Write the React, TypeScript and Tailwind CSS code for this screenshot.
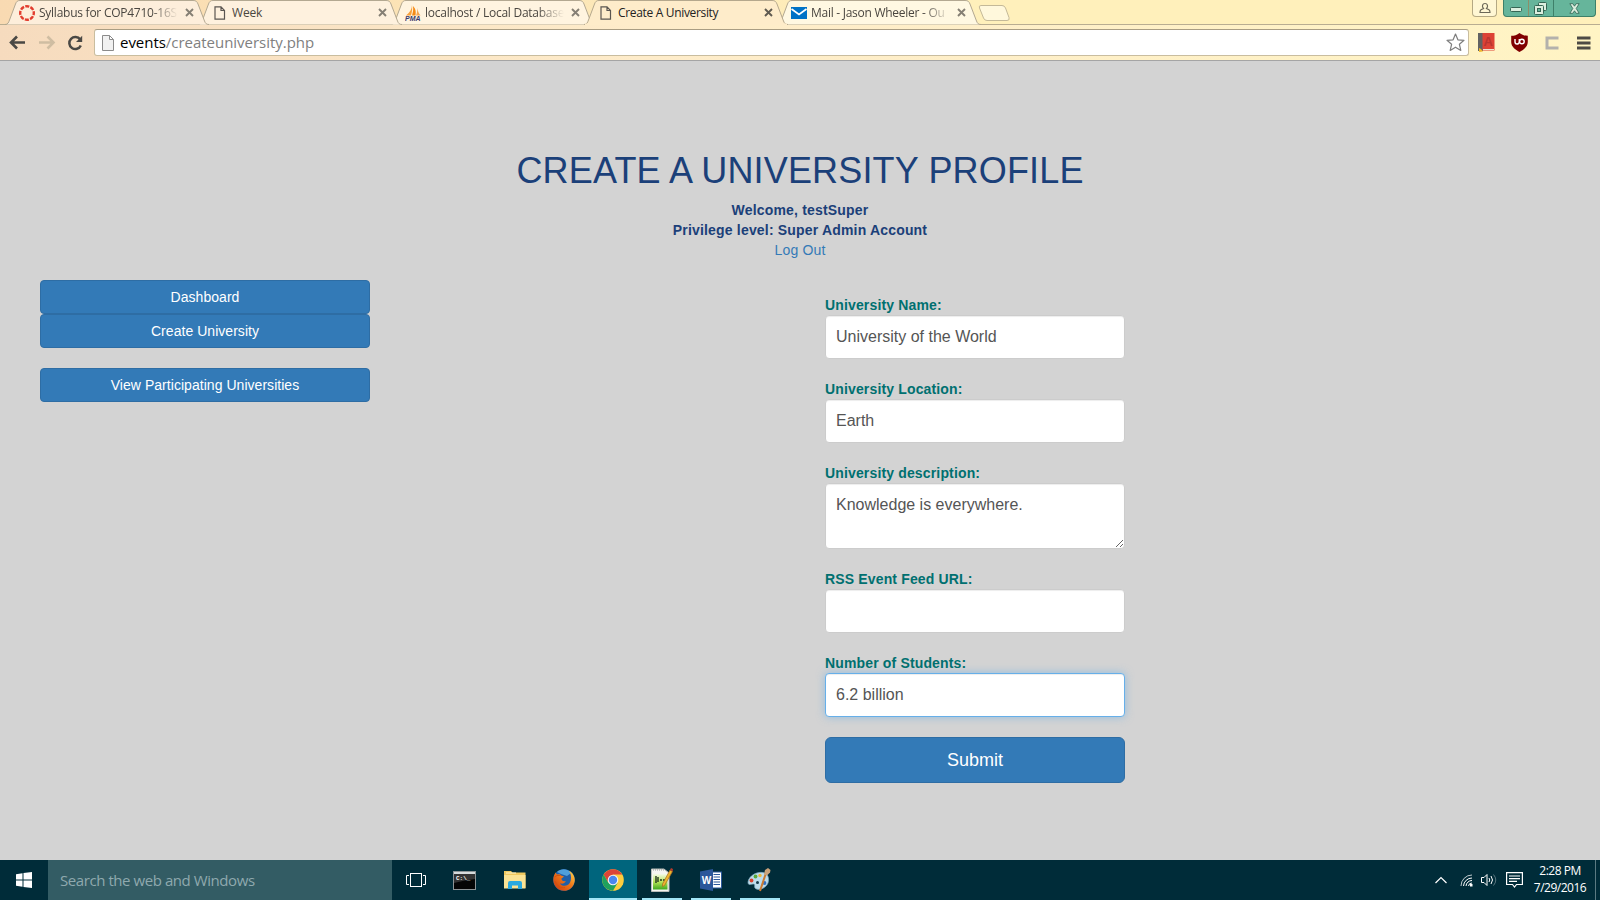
import type { ReactNode } from 'react';

const uiFont = "font-['Open_Sans','Noto_Sans',sans-serif]";

function TabShape({ active, tint }: { active?: boolean; tint: string }) {
  return (
    <svg className="absolute inset-0" width="204" height="25" viewBox="0 0 204 25" fill="none">
      <path
        d="M0 24.5 C3 24.5 3.5 22.5 4.5 20 L10.5 4 C11.5 1.5 12.5 0.5 15 0.5 H188 C191 0.5 192 1.5 193 4 L199.500 21 C200.500 23.500 201.500 24.500 204 24.500"
        fill={tint}
        stroke={active ? '#b5a88d' : '#b3a891'}
      />
      {active && <path d="M1 24.500 H203" stroke={tint} strokeWidth="2" />}
    </svg>
  );
}

function Tab({ title, icon, active, z, fade, tracking, tint }: { title: string; icon: ReactNode; active?: boolean; z: string; fade?: boolean; tracking: string; tint: string }) {
  return (
    <div className={`relative -mr-[11px] h-[25px] w-[204px] shrink-0 ${z}`}>
      <TabShape active={active} tint={tint} />
      <div className="relative flex h-[25px] items-center pl-[14px]">
        <div className="flex w-[20px] shrink-0 items-center">{icon}</div>
        <div
          className={`w-[140px] overflow-hidden whitespace-nowrap text-[12px] leading-[18px] ${tracking} ${active ? 'text-[#222]' : 'text-[#4a4640]'} ${fade ? '[mask-image:linear-gradient(to_right,black_112px,transparent_139px)]' : ''}`}
        >
          {title}
        </div>
        <svg className="ml-[6px] shrink-0" width="9" height="9" viewBox="0 0 9 9">
          <path d="M1 1 L8 8 M8 1 L1 8" stroke={active ? '#5f5a50' : '#857f74'} strokeWidth="1.900" />
        </svg>
      </div>
    </div>
  );
}

const PageIcon = () => (
  <svg className="ml-[2px]" width="12" height="14" viewBox="0 0 12 14" fill="none" stroke="#5a5550" strokeWidth="1.200">
    <path d="M1 .8 H7 L10.500 4.500 V13.200 H1 Z M7 .8 V4.500 H10.500" />
  </svg>
);

const CanvasIcon = () => (
  <svg width="16" height="16" viewBox="0 0 16 16" fill="none">
    <circle cx="8" cy="8" r="6.800" stroke="#e23c2e" strokeWidth="2.400" strokeDasharray="4.100 1.240" strokeDashoffset="2" />
  </svg>
);

const PmaIcon = () => (
  <svg width="17" height="16" viewBox="0 0 17 16">
    <path d="M7 0 C7 4 5 7 1 10.500 H6 C7 7 7.500 4 7 0Z" fill="#f9a13c" />
    <path d="M8 1 C11 4 11 7 10.500 10.500 H7 C8 7 8.500 5 8 1Z" fill="#f58a15" />
    <path d="M12 3 C13 6 13.500 8 15.500 10.500 H11 C12 8 12.500 6 12 3Z" fill="#f5a550" />
    <text x="0" y="15.800" fontSize="6.500" fontWeight="700" fontStyle="italic" fontFamily="Liberation Sans" fill="#39396b" textLength="15.500" lengthAdjust="spacingAndGlyphs">PMA</text>
  </svg>
);

const MailIcon = () => (
  <svg width="16" height="12" viewBox="0 0 16 12">
    <rect width="16" height="12" fill="#0072c6" />
    <path d="M.5 2 L8 7.500 L15.500 2" stroke="#fff" strokeWidth="1.700" fill="none" />
  </svg>
);

function WindowControls() {
  return (
    <div className="ml-auto flex h-[17px] items-start pr-[4px]">
      <div className="mr-[6px] flex h-[17px] w-[25px] items-center justify-center rounded-b-[4px] border border-t-0 border-[#b5a984] bg-[#fff7d4]">
        <svg width="12" height="12" viewBox="0 0 12 12" fill="none" stroke="#6c6858" strokeWidth="1.200">
          <path d="M4.500 6.500 C2.500 4.500 3.500 1.500 6 1.500 S9.500 4.500 7.500 6.500 L10 7.800 Q11 8.500 11 10.500 H1 Q1 8.500 2 7.800 Z" />
        </svg>
      </div>
      <div className="flex h-[17px] w-[93px] rounded-b-[4px] border border-t-0 border-[#3e8069] bg-[#66b59b]">
        <div className="flex w-[25px] items-center justify-center border-r border-[#8c8f69]">
          <svg width="13" height="6" viewBox="0 0 13 6" className="mt-[4px]">
            <rect x=".5" y=".5" width="11" height="4" rx="1" fill="#dcefdf" stroke="#356654" />
          </svg>
        </div>
        <div className="flex w-[25px] items-center justify-center border-r border-[#3e8069]">
          <svg className="-ml-[2px]" width="13" height="13" viewBox="0 0 13 13" fill="none">
            <rect x="4.500" y=".5" width="8" height="8" rx="1" fill="#dcefdf" stroke="#356654" />
            <rect x=".5" y="3.500" width="9" height="9" rx="1" fill="#dcefdf" stroke="#356654" />
            <rect x="3.500" y="6.500" width="3" height="3" fill="#66b59b" stroke="#356654" />
          </svg>
        </div>
        <div className="flex flex-1 items-center justify-center">
          <svg width="11" height="11" viewBox="0 0 13 11" preserveAspectRatio="none">
            <path d="M1 .7 H4.500 L6.500 3.200 L8.500 .7 H12 L8.500 5.500 L12 10.300 H8.500 L6.500 7.800 L4.500 10.300 H1 L4.500 5.500 Z" fill="#dcefdf" stroke="#356654" strokeWidth=".9" />
          </svg>
        </div>
      </div>
    </div>
  );
}

function BrowserChrome() {
  return (
    <div className={`flex h-[61px] shrink-0 flex-col border-b border-[#a5a5a5] bg-linear-to-r from-[#f6dbbe] via-[#feecca] via-40% to-[#fff4c4] ${uiFont}`}>
      <div className="flex h-[25px] shrink-0 items-start bg-linear-to-r from-[#f9dab2] via-[#fff0bb] via-60% to-[#fff0bb] pl-[5px] shadow-[inset_0_-1px_0_#b9ad91]">
        <Tab z="z-10" tint="#fdeedb" title="Syllabus for COP4710-16S" icon={<CanvasIcon />} fade tracking="tracking-[-0.25px]" />
        <Tab z="z-[8]" tint="#fef1de" title="Week" icon={<PageIcon />} tracking="tracking-[-0.15px]" />
        <Tab z="z-[6]" tint="#fff4e0" title="localhost / Local Database" icon={<PmaIcon />} fade tracking="tracking-[-0.25px]" />
        <Tab z="z-20" tint="#feecca" title="Create A University" icon={<PageIcon />} active tracking="tracking-[-0.33px]" />
        <Tab z="z-[4]" tint="#fff8e2" title="Mail - Jason Wheeler - Ou" icon={<MailIcon />} fade tracking="tracking-[-0.27px]" />
        <svg className="mt-[4px] ml-[8px] shrink-0" width="33" height="18" viewBox="0 0 33 18">
          <path d="M3 1.500 H24 Q26.500 1.500 27.500 4 L31 13.500 Q32 16.500 29 16.500 H9 Q6.500 16.500 5.500 14 L1.500 4 Q.5 1.500 3 1.500Z" fill="#fff8dc" stroke="#c4b998" />
        </svg>
        <WindowControls />
      </div>
      <div className="flex h-[35px] items-center">
        <svg className="ml-[9px] shrink-0" width="17" height="15" viewBox="0 0 17 15" fill="none" stroke="#4a4844" strokeWidth="2.600">
          <path d="M16 7.500 H3 M8 1.500 L2 7.500 L8 13.500" />
        </svg>
        <svg className="ml-[13px] shrink-0" width="17" height="15" viewBox="0 0 17 15" fill="none" stroke="#cfbda2" strokeWidth="2.600">
          <path d="M0 7.500 H14 M8.500 1.500 L14.500 7.500 L8.500 13.500" />
        </svg>
        <svg className="ml-[11px] shrink-0" width="16" height="16" viewBox="0 0 16 16" fill="none">
          <path d="M13.200 4.500 A6 6 0 1 0 13.800 10.500" stroke="#4a4844" strokeWidth="2.500" />
          <path d="M15.200 .8 V7 H9 Z" fill="#4a4844" />
        </svg>
        <div className="ml-[11px] flex h-[27px] w-[1375px] shrink-0 items-center rounded-[3px] border border-[#c9bd9f] border-t-[#a99d83] bg-white">
          <svg className="ml-[7px]" width="12" height="16" viewBox="0 0 12 16" fill="#f1f1f1" stroke="#8b8b8b">
            <path d="M.5 .5 H7.500 L11.500 4.500 V15.500 H.5 Z M7.500 .5 V4.500 H11.500" />
          </svg>
          <span className="mb-[2px] ml-[6px] text-[15px] leading-[22px] tracking-[-0.03px] text-[#808080]">
            <span className="text-black">events</span>/createuniversity.php
          </span>
          <svg className="mr-[3px] ml-auto" width="19" height="19" viewBox="0 0 19 19" fill="#fff" stroke="#7d7d7d" strokeWidth="1.200" strokeLinejoin="round">
            <path d="M9.500 1 L11.900 6.800 L18 7.300 L13.400 11.300 L14.800 17.400 L9.500 14.200 L4.200 17.400 L5.600 11.300 L1 7.300 L7.100 6.800Z" />
          </svg>
        </div>
        <svg className="ml-[9px] shrink-0" width="17" height="19" viewBox="0 0 17 19">
          <rect x="0" y="0" width="5" height="18" fill="#626262" />
          <rect x="4.500" y="0" width="12" height="17.500" fill="#dd4235" />
          <text x="5.500" y="13" fontSize="13" fontWeight="700" fontFamily="Liberation Sans" fill="#b93530">A</text>
          <path d="M1 19 V15 L3 16 L5 18.500Z" fill="#f2b82c" />
          <path d="M5 16.500 H16" stroke="#eee2cf" />
        </svg>
        <svg className="ml-[16px] shrink-0" width="17" height="19" viewBox="0 0 17 19">
          <path d="M8.500 0 C11 2 13.500 2.800 16.800 2.800 V9 C16.800 14 12 17 8.500 19 C5 17 .2 14 .2 9 V2.800 C3.500 2.800 6 2 8.500 0Z" fill="#800000" />
          <path d="M4 6 V8.800 Q4 11 6 11 T8.300 8.800 V6" fill="none" stroke="#fff" strokeWidth="1.400" />
          <circle cx="10.900" cy="8.500" r="2.300" fill="none" stroke="#fff" strokeWidth="1.400" />
        </svg>
        <svg className="ml-[17px] shrink-0" width="14" height="14" viewBox="0 0 14 14" fill="none" stroke="#b3b1ac" strokeWidth="3">
          <path d="M13.500 2 H2 V12 H13.500" />
        </svg>
        <svg className="ml-[18px] shrink-0" width="14" height="14" viewBox="0 0 14 14" stroke="#4d4a45" strokeWidth="3">
          <path d="M0 2 H13.500 M0 7 H13.500 M0 12 H13.500" />
        </svg>
      </div>
    </div>
  );
}

function NavButton({ children }: { children: ReactNode }) {
  return (
    <button className="h-[34px] w-full rounded-[4px] border border-[#2e6da4] bg-[#337ab7] text-[14px] leading-[20px] tracking-[0.04px] text-white">{children}</button>
  );
}

const inputBase =
  'block h-[44px] w-full rounded-[4px] border bg-white px-[10px] text-[16px] leading-[23px] text-[#555] outline-none';
const plain = 'border-[#ccc] shadow-[inset_0_1px_1px_rgba(0,0,0,0.075)]';
const focused = 'border-[#66afe9] shadow-[inset_0_1px_1px_rgba(0,0,0,0.075),0_0_8px_rgba(102,175,233,0.6)]';

function Field({ label, children }: { label: string; children: ReactNode }) {
  return (
    <label className="mb-[20px] block">
      <span className="block h-[20px] text-[14px] leading-[20px] font-bold tracking-[0.15px] text-[#007070]">{label}</span>
      {children}
    </label>
  );
}

function PageBody() {
  return (
    <main className="flex-1 bg-[#d3d3d3] pt-[90px] font-['Liberation_Sans',Arial,sans-serif]">
      <header className="text-center text-[14px] leading-[20px] text-[#1b4079]">
        <h1 className="mb-[9px] text-[36px] leading-[40px] tracking-[0.16px]">CREATE A UNIVERSITY PROFILE</h1>
        <p className="font-bold tracking-[0.18px]">Welcome, testSuper</p>
        <p className="font-bold tracking-[0.18px]">Privilege level: Super Admin Account</p>
        <a className="block tracking-[0.15px] text-[#337ab7]">Log Out</a>
      </header>
      <div className="flex items-start pt-[20px] pl-[40px]">
        <nav className="w-[330px]">
          <NavButton>Dashboard</NavButton>
          <NavButton>Create University</NavButton>
          <div className="h-[20px]" />
          <NavButton>View Participating Universities</NavButton>
        </nav>
        <form className="ml-[455px] w-[300px] pt-[15px]">
          <Field label="University Name:">
            <input className={`${inputBase} ${plain}`} defaultValue="University of the World" />
          </Field>
          <Field label="University Location:">
            <input className={`${inputBase} ${plain}`} defaultValue="Earth" />
          </Field>
          <Field label="University description:">
            <textarea
              className={`block h-[66px] w-full rounded-[4px] border bg-white px-[10px] py-[9px] text-[16px] leading-[23px] text-[#555] outline-none ${plain}`}
              defaultValue="Knowledge is everywhere."
            />
          </Field>
          <Field label="RSS Event Feed URL:">
            <input className={`${inputBase} ${plain}`} />
          </Field>
          <Field label="Number of Students:">
            <input className={`${inputBase} ${focused}`} defaultValue="6.2 billion" />
          </Field>
          <button type="button" className="h-[46px] w-full rounded-[6px] border border-[#2e6da4] bg-[#337ab7] text-[18px] leading-[24px] text-white">
            Submit
          </button>
        </form>
      </div>
    </main>
  );
}

function TaskItem({ children, state }: { children: ReactNode; state?: 'open' | 'active' }) {
  return (
    <div className={`mr-[1px] flex h-[40px] w-[48px] shrink-0 flex-col items-center ${state === 'active' ? 'bg-[#00657d]' : ''}`}>
      <div className="flex h-[38px] items-center pt-[2px]">{children}</div>
      {state && <div className={`h-[2px] bg-[#a2e6f7] ${state === 'active' ? 'w-[48px]' : 'w-[40px]'}`} />}
    </div>
  );
}

const TaskViewIcon = () => (
  <svg className="-ml-[2px]" width="20" height="14" viewBox="0 0 20 14" fill="none" stroke="#fff" strokeWidth="1">
    <rect x="4.500" y=".5" width="11" height="13" />
    <path d="M3 2.500 H.5 V11.500 H3 M17 2.500 H19.500 V11.500 H17" />
  </svg>
);
const TerminalIcon = () => (
  <svg className="-ml-[3px]" width="23" height="19" viewBox="0 0 23 19">
    <rect x=".5" y=".5" width="22" height="18" fill="#050505" stroke="#8d9496" />
    <rect x="1" y="1" width="21" height="2" fill="#d7dcdd" />
    <path d="M1 3 H22 V8 Q12 9 1 12Z" fill="#333" />
    <text x="3" y="9" fontSize="6" fontWeight="700" fontFamily="Liberation Mono" fill="#fff">C:\_</text>
  </svg>
);
const FolderIcon = () => (
  <svg width="22" height="18" viewBox="0 0 22 18">
    <path d="M0 0 H7 L8.500 1.500 H21.500 V17 H0Z" fill="#f0c95f" />
    <path d="M0 4 H21.500 V17.500 H0Z" fill="#fbe394" />
    <path d="M2 2 H12" stroke="#fff6cf" />
    <path d="M4 18 V12 Q4 10 6 10 H16 Q18 10 18 12 V18 H14 V14.500 H8 V18Z" fill="#2aa9e0" />
  </svg>
);
const FirefoxIcon = () => (
  <svg width="22" height="22" viewBox="0 0 22 22">
    <defs>
      <linearGradient id="ff" x1="0" y1="1" x2="1" y2="0">
        <stop offset="0" stopColor="#c8370f" />
        <stop offset=".55" stopColor="#ee7718" />
        <stop offset="1" stopColor="#ffd94a" />
      </linearGradient>
    </defs>
    <circle cx="11" cy="11" r="10.800" fill="#1f5fa8" />
    <path d="M4 3 C8 -1 15 -.5 18 4 L14 7 L8 5Z" fill="#4f9fdb" />
    <path d="M16 1.800 C20.500 4 22.500 9 21.500 13 C20 20 13 23.500 7 21 C1.500 18.500 -1 12 1 6.500 L2.500 3.500 L4 5.500 C6 5 7.500 5.500 8 6.500 L11 7.500 L8.500 9.500 C8.300 12 10.300 12.600 12.800 12 C11.500 14.800 9 15.200 7 14.200 C9 18 15 17.500 17 13.500 C18.800 9.500 18 5 16 1.800Z" fill="url(#ff)" />
    <path d="M1.500 8 L4 6.500 L7.500 6.500 M2 12 C3.500 17 8 19.500 12 18.500" stroke="#d4500f" fill="none" />
  </svg>
);
const ChromeIcon = () => (
  <svg width="22" height="22" viewBox="0 0 22 22">
    <circle cx="11" cy="11" r="10.800" fill="#fccd3e" />
    <path d="M1.650 5.600 A10.800 10.800 0 0 1 20.350 5.600 H11 L6.300 13.700Z" fill="#dc4437" />
    <path d="M1.650 5.600 A10.800 10.800 0 0 0 11 21.800 L15.700 13.700 L6.300 13.700Z" fill="#1fa15d" />
    <circle cx="11" cy="11" r="5.300" fill="#f4f4f4" />
    <circle cx="11" cy="11" r="4.200" fill="#4a87ee" />
  </svg>
);
const NotepadIcon = () => (
  <svg width="22" height="24" viewBox="0 0 22 24">
    <defs>
      <linearGradient id="np" x1="0" y1="0" x2="0" y2="1">
        <stop offset="0" stopColor="#f5fbe9" />
        <stop offset=".5" stopColor="#b7e458" />
        <stop offset="1" stopColor="#3fa91e" />
      </linearGradient>
    </defs>
    <path d="M.5 1 H13 L18 5 V23.500 H.5Z" fill="#f6f6f2" stroke="#b9bdb9" />
    <rect x="2" y="6" width="14.500" height="15.500" fill="url(#np)" />
    <path d="M2 2 H14" stroke="#999" strokeDasharray="1 1" />
    <path d="M5 8 V15 M7 9 V14 M9 12 H11 M12 12 H14" stroke="#20371b" strokeWidth="1.400" />
    <path d="M19 2 L21.500 3.500 L13.500 17.500 L11.500 18.500 L11.500 16Z" fill="#efb52e" stroke="#a56a1f" strokeWidth=".7" />
    <path d="M19 2 L20 0 L22 1 L21.500 3.500Z" fill="#b33b2c" />
  </svg>
);
const WordIcon = () => (
  <svg width="22" height="22" viewBox="0 0 22 22">
    <rect x="11" y="3" width="10.500" height="16" fill="#fff" stroke="#2b579a" />
    <path d="M13.500 5.500 H20 M13.500 8 H20 M13.500 10.500 H20 M13.500 13 H20 M13.500 15.500 H20" stroke="#2b579a" strokeWidth="1.200" />
    <path d="M0 2.500 L13 0 V22 L0 19.500Z" fill="#2b579a" />
    <text x="1.800" y="15" fontSize="10.500" fontWeight="700" fontFamily="Liberation Sans" fill="#fff" textLength="9.500" lengthAdjust="spacingAndGlyphs">W</text>
  </svg>
);
const PaintIcon = () => (
  <svg className="-ml-[2px]" width="24" height="24" viewBox="0 0 24 24">
    <path d="M1 14 C2 7.500 10 3.500 16 4.500 C21 5.500 22.500 10 21 15 C19 20 12 23 8.500 20.500 C6.500 19 9 16.500 6.500 16 C4 16 1 18 1 14Z" fill="#bcdcec" stroke="#7ea9be" strokeWidth=".7" />
    <circle cx="4.500" cy="12.500" r="1.900" fill="#d8432e" />
    <circle cx="8.500" cy="8.500" r="1.900" fill="#58aa3b" />
    <circle cx="13" cy="7.500" r="1.700" fill="#f0b83a" />
    <circle cx="10.500" cy="14.500" r="1.500" fill="#173a4a" />
    <circle cx="17.500" cy="15" r="1.900" fill="#3370c0" />
    <path d="M19 5 L13 23" stroke="#cb7b32" strokeWidth="2" />
    <path d="M17 6.500 L18 2 L21 0 L23.500 2 L23 4.500 L20 7.500Z" fill="#c9a27a" />
  </svg>
);

function Taskbar() {
  return (
    <footer className={`flex h-[40px] shrink-0 bg-[#002c39] ${uiFont}`}>
      <div className="flex w-[48px] items-center justify-center">
        <svg width="16" height="16" viewBox="0 0 16 16" fill="#fff">
          <path d="M0 2.300 L6.500 1.300 V7.500 H0Z M7.500 1.100 L16 0 V7.500 H7.500Z M0 8.500 H6.500 V14.700 L0 13.700Z M7.500 8.500 H16 V16 L7.500 14.900Z" />
        </svg>
      </div>
      <div className="mr-[1px] flex w-[344px] items-center bg-[#335c64] pl-[12px] text-[15px] tracking-[-0.43px] text-[#8fa9ae]">
        Search the web and Windows
      </div>
      <TaskItem><TaskViewIcon /></TaskItem>
      <TaskItem><TerminalIcon /></TaskItem>
      <TaskItem><FolderIcon /></TaskItem>
      <TaskItem><FirefoxIcon /></TaskItem>
      <TaskItem state="active"><ChromeIcon /></TaskItem>
      <TaskItem state="open"><NotepadIcon /></TaskItem>
      <TaskItem state="open"><WordIcon /></TaskItem>
      <TaskItem state="open"><PaintIcon /></TaskItem>
      <div className="ml-auto flex items-center text-white">
        <svg className="mr-[13px]" width="12" height="8" viewBox="0 0 12 8" fill="none" stroke="#fff" strokeWidth="1.200">
          <path d="M.5 7 L6 1.500 L11.500 7" />
        </svg>
        <svg className="mr-[8px]" width="13" height="13" viewBox="0 0 13 13" fill="none" stroke="#fff">
          <path d="M1 12 A11 11 0 0 1 12 1" opacity=".75" />
          <path d="M3.500 12 A8.500 8.500 0 0 1 12 4" />
          <path d="M6 12 A6 6 0 0 1 12 6.500" />
          <path d="M8.500 12 A3.500 3.500 0 0 1 12 9" />
          <rect x="10" y="10" width="2.500" height="2.500" fill="#fff" stroke="none" />
        </svg>
        <svg className="mr-[8px]" width="17" height="14" viewBox="0 0 17 14" fill="none" stroke="#fff">
          <path d="M.5 4.500 H3 L6 1.500 V12.500 L3 9.500 H.5Z" />
          <path d="M8 5 Q9.500 7 8 9 M10 3 Q13 7 10 11" />
          <path d="M12.500 1.500 Q17 7 12.500 12.500" opacity=".35" />
        </svg>
        <svg className="mr-[10px]" width="17" height="17" viewBox="0 0 17 17" fill="none" stroke="#fff" strokeWidth="1.200">
          <path d="M.6 .6 H16.400 V12.500 H10.500 L8.500 15 L6.500 12.500 H.6Z M3 4 H14 M3 6.700 H14 M3 9.400 H11" />
        </svg>
        <div className="mr-[8px] mb-[2px] flex w-[54px] flex-col items-center text-[12px] leading-[17px] tracking-[-0.5px] whitespace-nowrap">
          <span>2:28 PM</span>
          <span>7/29/2016</span>
        </div>
        <div className="mr-[4px] h-[40px] w-[1px] bg-[#5b7a82]" />
      </div>
    </footer>
  );
}

export default function App() {
  return (
    <div className="flex h-[900px] w-[1600px] flex-col overflow-hidden">
      <BrowserChrome />
      <PageBody />
      <Taskbar />
    </div>
  );
}
